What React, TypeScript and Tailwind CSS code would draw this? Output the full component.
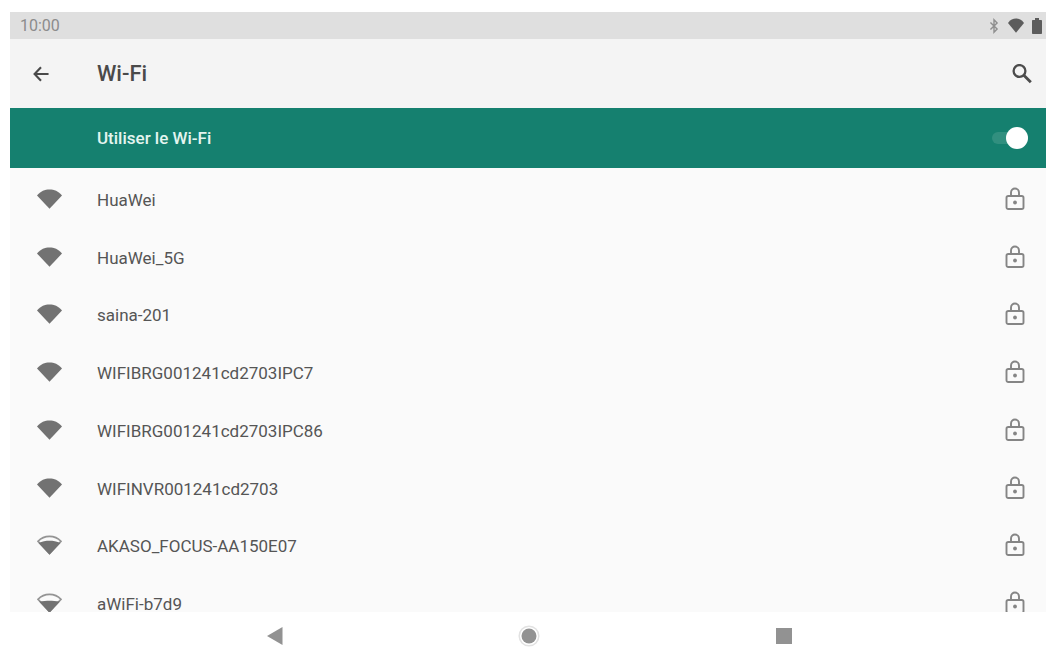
import { useState } from "react";

type Level = "full" | "high" | "medium";

const networks: { name: string; level: Level }[] = [
  { name: "HuaWei", level: "full" },
  { name: "HuaWei_5G", level: "full" },
  { name: "saina-201", level: "full" },
  { name: "WIFIBRG001241cd2703IPC7", level: "full" },
  { name: "WIFIBRG001241cd2703IPC86", level: "full" },
  { name: "WIFINVR001241cd2703", level: "full" },
  { name: "AKASO_FOCUS-AA150E07", level: "high" },
  { name: "aWiFi-b7d9", level: "medium" },
];

function WifiIcon({ level, className }: { level: Level; className: string }) {
  return (
    <svg viewBox="0 2 24 20" preserveAspectRatio="none" className={className} fill="currentColor" aria-hidden="true">
      {level === "full" && <path d="M12 21.800 0 8.500C3.500 4.200 7.500 2.600 12 2.600S20.500 4.200 24 8.500Z" />}
      {level !== "full" && (
        <>
          <path d="M12 20.500 1 8.300C4.200 4.700 8 3.400 12 3.400S19.800 4.700 23 8.300Z" fill="none" stroke="currentColor" strokeWidth="1.700" opacity="0.75" />
          {level === "high" ? (
            <path d="M12 21.800 1.500 10C5 8.300 8.500 7.700 12 7.700S19 8.300 22.500 10Z" />
          ) : (
            <path d="M12 21.800 2 10.500C6 10 9 9.800 12 9.800S18 10 22 10.500Z" />
          )}
        </>
      )}
    </svg>
  );
}

function LockIcon() {
  return (
    <svg viewBox="0 0 20 24" className="h-6 w-5 shrink-0 text-[#858585]" fill="none" stroke="currentColor" strokeWidth="1.900" aria-hidden="true">
      <rect x="1.500" y="9" width="17" height="13" rx="1.800" />
      <path d="M6 9V5.500a4 4 0 0 1 8 0V9" />
      <circle cx="10" cy="15.500" r="1.900" fill="currentColor" stroke="none" />
    </svg>
  );
}

export default function App() {
  const [enabled, setEnabled] = useState(true);

  return (
    <div className="flex h-screen flex-col bg-white pt-3 pr-[7px] pl-[10px] font-[Roboto,sans-serif] text-[#555555]">
      <div className="flex h-[27px] shrink-0 items-center justify-between bg-[#dfdfdf] pr-1 pl-[10px]">
        <span className="text-base leading-5 text-[#8c8c8c]">10:00</span>
        <div className="flex items-center gap-2 text-[#5c5c5c]">
          <svg viewBox="0 0 12 18" className="h-4 w-3 text-[#8f8f8f]" fill="none" stroke="currentColor" strokeWidth="1.600" aria-hidden="true">
            <path d="m2 5 7.500 7.500L6 16V2l3.500 3.500L2 13" />
          </svg>
          <WifiIcon level="full" className="h-[15px] w-4" />
          <svg viewBox="0 0 10 16" className="h-4 w-[10px]" fill="currentColor" aria-hidden="true">
            <path d="M3 0h4v2h2.200q.8 0 .8.800v12.400q0 .8-.8.800H.8q-.8 0-.8-.8V2.800Q0 2 .8 2H3Z" />
          </svg>
        </div>
      </div>

      <header className="flex h-[69px] shrink-0 items-center bg-[#f4f4f4] pr-3 pl-[19px]">
        <button type="button" aria-label="Retour" className="flex h-6 w-6 items-center justify-center text-[#4a4a4a]">
          <svg viewBox="0 0 18 18" className="h-4 w-4" fill="none" stroke="currentColor" strokeWidth="2.400" aria-hidden="true">
            <path d="M17.500 9H3M9 1.500 1.800 9 9 16.500" />
          </svg>
        </button>
        <h1 className="ml-11 flex-1 text-[22px] leading-7 font-medium text-[#4a4a4a]">Wi-Fi</h1>
        <button type="button" aria-label="Rechercher" className="flex h-6 w-6 items-center justify-center text-[#4c4c4c]">
          <svg viewBox="0 0 20 20" className="h-5 w-5" fill="none" stroke="currentColor" strokeWidth="2.300" aria-hidden="true">
            <circle cx="7.500" cy="7" r="5.900" />
            <path d="m11.800 11.300 7 7" strokeWidth="2.800" />
          </svg>
        </button>
      </header>

      <label className="flex h-[60px] shrink-0 cursor-pointer items-center justify-between bg-[#15806f] pr-[18px] pl-[87px]">
        <span className="text-[17px] leading-5 font-medium text-[#e4f5ef]">Utiliser le Wi-Fi</span>
        <span className="relative flex h-6 w-9 items-center">
          <input
            type="checkbox"
            role="switch"
            checked={enabled}
            onChange={() => setEnabled(!enabled)}
            className="peer h-3 w-full cursor-pointer appearance-none rounded-full bg-[#318f7f]"
          />
          <span className="pointer-events-none absolute left-0 h-[22px] w-[22px] rounded-full bg-white peer-checked:right-0 peer-checked:left-auto" />
        </span>
      </label>

      <main className="min-h-0 flex-1 overflow-hidden bg-[#fafafa] pt-[3px]">
        <ul className="grid h-[462px] auto-rows-fr">
          {networks.map((network) => (
            <li key={network.name} className="flex">
              <button type="button" className="flex flex-1 items-center pr-[21px] pl-[27px] text-left">
                <WifiIcon level={network.level} className="mb-[2px] h-5 w-[25px] shrink-0 text-[#727272]" />
                <span className="ml-[35px] flex-1 text-[17px] leading-4">{network.name}</span>
                <span className="mb-[2px]">
                  <LockIcon />
                </span>
              </button>
            </li>
          ))}
        </ul>
      </main>

      <nav className="flex h-[42px] shrink-0 justify-center text-[#929292]">
        <div className="grid w-[74%] grid-cols-3 place-items-center pt-2 pb-[2px] pl-[3px]">
          <button type="button" aria-label="Précédent" className="flex h-6 w-6 items-center justify-center">
            <svg viewBox="0 0 16 18" className="h-[18px] w-4" fill="currentColor" aria-hidden="true">
              <path d="M15.500 0v18L0 9Z" />
            </svg>
          </button>
          <button type="button" aria-label="Accueil" className="flex h-6 w-6 items-center justify-center">
            <svg viewBox="0 0 22 22" className="h-[22px] w-[22px]" aria-hidden="true">
              <circle cx="11" cy="11" r="9.800" fill="none" stroke="#e2e2e2" strokeWidth="1.500" />
              <circle cx="11" cy="11" r="7.500" fill="currentColor" />
            </svg>
          </button>
          <button type="button" aria-label="Applications récentes" className="flex h-6 w-6 items-center justify-center">
            <span className="h-4 w-4 bg-[#929292]" />
          </button>
        </div>
      </nav>
    </div>
  );
}
